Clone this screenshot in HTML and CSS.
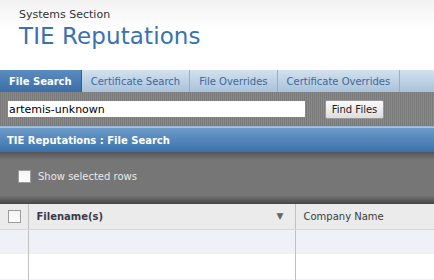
FILE: index.html
```html
<!DOCTYPE html>
<html lang="en">
  <head>
    <meta charset="UTF-8" />
    <title>TIE Reputations</title>
    <link rel="stylesheet" href="styles.css">
  </head>
  <body>
    <header class="pageHead">
      <div class="section">Systems Section</div>
      <h1>TIE Reputations</h1>
    </header>

    <nav class="tabs">
      <a class="tab active">File Search</a>
      <a class="tab">Certificate Search</a>
      <a class="tab">File Overrides</a>
      <a class="tab">Certificate Overrides</a>
      <span class="tabFill"></span>
    </nav>

    <div class="toolbar">
      <input class="search" type="text" value="artemis-unknown" />
      <button class="findBtn">Find Files</button>
    </div>

    <div class="panelTitle">TIE Reputations : File Search</div>

    <div class="options">
      <label class="showSel"><span class="box"></span>Show selected rows</label>
    </div>
    <div class="optionsShade"></div>

    <div class="gridWrap">
      <table class="grid">
        <thead>
          <tr>
            <th class="chk"><span class="box"></span></th>
            <th class="fname">Filename(s) <span class="sort">&#9660;</span></th>
            <th class="cname">Company Name</th>
          </tr>
        </thead>
        <tbody>
          <tr class="odd"><td class="chk"></td><td></td><td></td></tr>
          <tr><td class="chk"></td><td></td><td></td></tr>
          <tr class="odd"><td class="chk"></td><td></td><td></td></tr>
        </tbody>
      </table>
    </div>
  </body>
</html>
```

FILE: styles.css
```css
* {
  margin: 0;
  padding: 0;
  box-sizing: border-box;
}

html,
body {
  overflow: hidden;
}

body {
  font-family: "DejaVu Sans", Tahoma, sans-serif;
  font-size: 10px;
  background: #ffffff;
  width: 434px;
  height: 280px;
}

.pageHead {
  height: 70px;
  padding: 8px 0 0 19px;
  background: linear-gradient(#f2f2f2, #ffffff 30px);
}

.section {
  font-size: 11px;
  color: #333333;
  height: 15px;
}

.pageHead h1 {
  font-weight: normal;
  font-size: 23px;
  color: #3a72b0;
  letter-spacing: 0.1px;
}

.tabs {
  display: flex;
  height: 22px;
}

.tab {
  display: flex;
  align-items: center;
  padding: 0 9px;
  color: #3b6aa0;
  background: linear-gradient(#d3e1ee, #a9c2da);
  border-right: 1px solid #8fb0d0;
  white-space: nowrap;
}

.tab.active {
  color: #ffffff;
  font-weight: bold;
  background: linear-gradient(#5b8cc0, #3a6ea8);
  border-right: 1px solid #2f5f95;
}

.tabFill {
  flex: 1;
  background: linear-gradient(#d3e1ee, #a9c2da);
}

.toolbar {
  height: 35px;
  display: flex;
  align-items: center;
  padding: 0 0 0 8px;
  gap: 20px;
  background: repeating-linear-gradient(90deg, #7a7a7a 0, #7a7a7a 1px, #8a8a8a 1px, #8a8a8a 2px);
  border-bottom: 1px solid #9ab4d0;
}

.search {
  width: 297px;
  height: 16px;
  border: none;
  padding: 0 1px;
  font-family: "DejaVu Sans", Tahoma, sans-serif;
  font-size: 11px;
  color: #000000;
  background: #ffffff;
}

.findBtn {
  width: 59px;
  height: 19px;
  font-family: "DejaVu Sans", Tahoma, sans-serif;
  font-size: 10px;
  color: #222222;
  border: 1px solid #9a9a9a;
  border-radius: 2px;
  background: linear-gradient(#fafafa, #dedede);
}

.panelTitle {
  height: 25px;
  display: flex;
  align-items: center;
  padding-left: 7px;
  color: #ffffff;
  font-weight: bold;
  background: linear-gradient(#6d9bc9, #3a71ad);
  border-top: 1px solid #a9c3dd;
}

.options {
  height: 43px;
  padding: 18px 0 0 18px;
  background: linear-gradient(#555555, #767676 8px, #767676);
}

.showSel {
  display: flex;
  align-items: center;
  gap: 7px;
  color: #e8e8e8;
}

.box {
  display: inline-block;
  width: 13px;
  height: 13px;
  border: 1px solid #9c9c9c;
  background: linear-gradient(#f4f4f4, #ffffff);
}

.optionsShade {
  height: 9px;
  background: linear-gradient(#787878, #454545);
}

.gridWrap {
  height: 76px;
  overflow: hidden;
}

.grid {
  width: 100%;
  border-collapse: collapse;
  table-layout: fixed;
}

.grid th {
  height: 25px;
  background: #ebebeb;
  border-bottom: 1px solid #d7d7d7;
  text-align: left;
  font-weight: normal;
  color: #3a3a3a;
  padding-left: 8px;
}

.grid th.chk {
  width: 28px;
  padding-left: 8px;
  border-right: 1px solid #c0c0c0;
}

.grid th.chk .box {
  vertical-align: middle;
}

.grid th.fname {
  width: 267px;
  font-weight: bold;
  color: #3a3a4a;
  border-right: 1px solid #c0c0c0;
}

.sort {
  float: right;
  margin-right: 11px;
  font-size: 9px;
  color: #666666;
}

.grid td {
  height: 25px;
  border-right: 1px solid #c0c0c0;
}

.grid td:last-child {
  border-right: none;
}

.grid tr.odd td {
  background: #eef2f6;
}
```
